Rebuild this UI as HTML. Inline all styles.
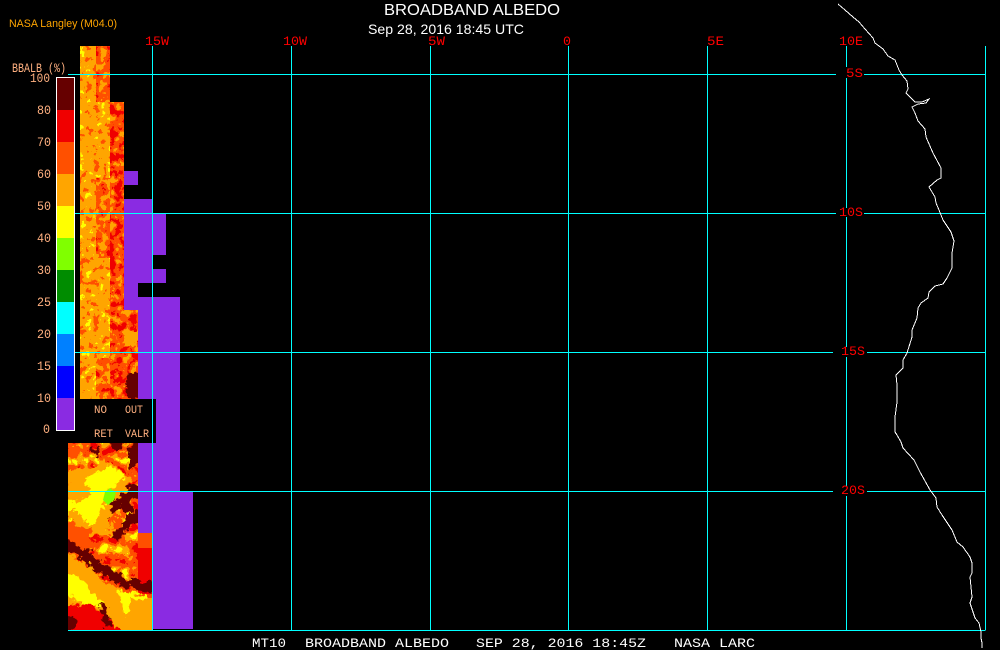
<!DOCTYPE html>
<html><head><meta charset="utf-8"><title>Broadband Albedo</title>
<style>
html,body{margin:0;padding:0;background:#000;width:1000px;height:650px;overflow:hidden}
svg{display:block}
text{font-family:"Liberation Sans",sans-serif}
.r{fill:#ff0000;font-size:13px;font-family:"Liberation Mono",monospace}
.o{fill:#ffb080;font-size:13px;font-family:"Liberation Mono",monospace}
.l{fill:#ffb080;font-size:11px;font-family:"Liberation Mono",monospace}
.b{fill:#fff;font-size:13px;font-family:"Liberation Mono",monospace}
</style></head><body>
<svg width="1000" height="650" viewBox="0 0 1000 650" xmlns="http://www.w3.org/2000/svg">
<defs>
<filter id="fo" x="0" y="0" width="1" height="1" color-interpolation-filters="sRGB">
<feTurbulence type="fractalNoise" baseFrequency="0.14" numOctaves="4" seed="4"/>
<feColorMatrix type="matrix" values="2 0 0 0 -.5 2 0 0 0 -.5 2 0 0 0 -.5 0 0 0 0 1"/>
<feComponentTransfer>
<feFuncR type="discrete" tableValues="1 1 1 1 1 1 1 1"/>
<feFuncG type="discrete" tableValues=".31 .31 .65 .65 .65 .65 .65 1"/>
<feFuncB type="discrete" tableValues="0 0 0 0 0 0 0 0"/>
</feComponentTransfer>
</filter>
<filter id="fr" x="0" y="0" width="1" height="1" color-interpolation-filters="sRGB">
<feTurbulence type="fractalNoise" baseFrequency="0.14" numOctaves="4" seed="9"/>
<feColorMatrix type="matrix" values="2 0 0 0 -.5 2 0 0 0 -.5 2 0 0 0 -.5 0 0 0 0 1"/>
<feComponentTransfer>
<feFuncR type="discrete" tableValues=".94 1 1 1 1 1 1 1"/>
<feFuncG type="discrete" tableValues="0 .31 .31 .31 .31 .65 .65 .65"/>
<feFuncB type="discrete" tableValues="0 0 0 0 0 0 0 0"/>
</feComponentTransfer>
</filter>
<filter id="fd" x="0" y="0" width="1" height="1" color-interpolation-filters="sRGB">
<feTurbulence type="fractalNoise" baseFrequency="0.13" numOctaves="4" seed="14"/>
<feColorMatrix type="matrix" values="2 0 0 0 -.5 2 0 0 0 -.5 2 0 0 0 -.5 0 0 0 0 1"/>
<feComponentTransfer>
<feFuncR type="discrete" tableValues=".94 .94 .94 1 1 1 1 1"/>
<feFuncG type="discrete" tableValues="0 0 0 .31 .31 .31 .65 .65"/>
<feFuncB type="discrete" tableValues="0 0 0 0 0 0 0 0"/>
</feComponentTransfer>
</filter>
<filter id="fb" x="0" y="0" width="1" height="1" color-interpolation-filters="sRGB">
<feTurbulence type="fractalNoise" baseFrequency="0.09" numOctaves="4" seed="21"/>
<feColorMatrix type="matrix" values="2 0 0 0 -.5 2 0 0 0 -.5 2 0 0 0 -.5 0 0 0 0 1"/>
<feComponentTransfer>
<feFuncR type="discrete" tableValues=".94 .94 1 1 1 1 1 1"/>
<feFuncG type="discrete" tableValues="0 0 .31 .31 .31 .65 .65 1"/>
<feFuncB type="discrete" tableValues="0 0 0 0 0 0 0 0"/>
</feComponentTransfer>
</filter>
<filter id="rag" filterUnits="userSpaceOnUse" x="50" y="300" width="120" height="340" color-interpolation-filters="sRGB">
<feTurbulence type="fractalNoise" baseFrequency="0.17" numOctaves="4" seed="3" result="n"/>
<feDisplacementMap in="SourceGraphic" in2="n" scale="12" xChannelSelector="R" yChannelSelector="G"/>
</filter>
<clipPath id="low"><polygon points="68,443 138,443 138,533 152,533 152,630 68,630"/></clipPath>
<clipPath id="pat"><rect x="124" y="310" width="14" height="89"/></clipPath>
</defs>

<rect width="1000" height="650" fill="#000"/>

<!-- purple no-retrieval areas -->
<g fill="#8a2be2" shape-rendering="crispEdges">
<rect x="124" y="171" width="14" height="14"/>
<rect x="124" y="199" width="28" height="14"/>
<rect x="124" y="213" width="42" height="42"/>
<rect x="124" y="255" width="28" height="14"/>
<rect x="124" y="269" width="42" height="14"/>
<rect x="124" y="283" width="14" height="14"/>
<rect x="124" y="297" width="56" height="14"/>
<rect x="138" y="310" width="42" height="181"/>
<rect x="138" y="491" width="14" height="42"/>
<rect x="152" y="491" width="41" height="138"/>
</g>

<!-- upper swath -->
<g shape-rendering="crispEdges">
<rect x="80" y="46" width="16" height="353" filter="url(#fo)"/>
<rect x="96" y="46" width="14" height="56" filter="url(#fr)"/>
<rect x="96" y="102" width="14" height="76" filter="url(#fo)"/>
<rect x="96" y="178" width="14" height="80" filter="url(#fr)"/>
<rect x="96" y="258" width="14" height="100" filter="url(#fo)"/>
<rect x="96" y="358" width="14" height="41" filter="url(#fr)"/>
<rect x="110" y="102" width="14" height="297" filter="url(#fd)"/>
<rect x="124" y="310" width="14" height="89" filter="url(#fd)"/>
</g>
<g clip-path="url(#pat)"><g filter="url(#rag)">
<polygon fill="#660000" points="126,374 140,372 140,398 128,400"/>
<polygon fill="#ffa500" points="124,330 140,330 140,345 124,345"/>
</g></g>

<!-- lower swath -->
<g clip-path="url(#low)">
<rect x="68" y="443" width="84" height="187" filter="url(#fb)" shape-rendering="crispEdges"/>
<rect x="138" y="533" width="14" height="97" fill="#ff5000"/>
<rect x="138" y="548" width="14" height="46" fill="#f00000"/>
<rect x="138" y="598" width="14" height="32" fill="#ffa500"/>
<g filter="url(#rag)">
<polygon fill="#ffa500" points="70,470 110,462 132,480 120,500 104,530 130,535 85,535 64,510"/>
<polygon fill="#ffff00" points="84,478 112,466 126,478 108,490 116,495 100,510 94,528 84,520 72,505 92,495"/>
<polygon fill="#ffff00" points="62,500 76,500 74,510 62,512"/>
<polygon fill="#ff5000" points="60,518 90,530 96,550 60,548"/>
<polygon fill="#ffa500" points="60,552 84,562 108,584 136,598 136,635 90,628 60,600"/>
<polygon fill="#ffff00" points="62,570 80,578 96,596 104,606 84,606 64,590"/>
<polygon fill="#ffff00" points="118,592 146,594 146,612 124,614"/>
<polygon fill="#ffa500" points="130,600 156,600 156,640 130,640"/>
<polygon fill="#f00000" points="60,606 90,604 116,624 128,640 60,640"/>
<polygon fill="#660000" points="66,612 78,622 72,632 62,626"/>
<polygon fill="#660000" points="60,536 78,546 92,552 100,563 112,570 125,578 140,582 158,582 158,594 138,590 122,586 108,578 92,570 84,560 60,548"/>
<polygon fill="#660000" points="128,448 136,440 142,440 142,462 130,470"/>
<polygon fill="#660000" points="106,440 128,440 116,452"/>
<polygon fill="#660000" points="112,503 128,488 142,482 142,492 122,504 110,516"/>
<polygon fill="#660000" points="114,534 128,515 142,508 142,520 126,530 118,542"/>
<polygon fill="#660000" points="120,504 132,498 134,510 124,514"/>
<polygon fill="#660000" points="98,606 104,604 114,626 106,628"/>
<polygon fill="#660000" points="88,450 100,446 98,456"/>
</g>
<polygon fill="#80ff00" points="105,492 110,488 116,493 114,500 108,505 103,500"/>
</g>

<!-- legend backing -->
<rect x="68" y="399" width="88" height="44" fill="#000"/>
<rect x="68" y="46" width="12" height="397" fill="#000"/>

<!-- grid -->
<g stroke="#00ffff" stroke-width="1" fill="none" shape-rendering="crispEdges">
<path d="M68 74.5H836M864 74.5H985"/>
<path d="M68 213.5H836M864 213.5H985"/>
<path d="M68 352.5H833M867 352.5H985"/>
<path d="M68 491.5H833M867 491.5H985"/>
<path d="M68 630.5H985.5"/>
<path d="M152.5 46V630"/>
<path d="M291.5 46V630"/>
<path d="M430.5 46V630"/>
<path d="M568.5 46V630"/>
<path d="M707.5 46V630"/>
<path d="M846.5 46V67M846.5 78V208M846.5 217V347M846.5 357V486M846.5 496V630"/>
<path d="M985.5 46V630"/>
</g>

<!-- coastline -->
<polyline fill="none" stroke="#fff" stroke-width="1" shape-rendering="crispEdges" points="838,4 845,10 853,17 859,22 865,29 873,38 875,43 883,49 888,56 895,60 897,65 899,70 902,75 907,81 908,89 906,93 912,99 915,102 922,102 929,99 926,103 918,104 912,107 915,113 918,121 925,129 926,137 933,153 941,168 941,178 937,180 929,187 935,197 936,203 939,210 943,220 945,223 951,232 954,241 952,253 952,268 947,278 943,284 935,286 929,292 928,298 921,303 918,308 917,318 912,330 912,337 907,353 903,360 903,368 896,375 897,385 897,402 895,417 895,432 897,435 901,442 903,448 914,460 920,472 930,490 936,498 937,507 942,515 952,530 957,542 963,547 970,557 972,563 972,573 970,577 971,587 972,597 970,603 975,618 979,623 981,632 981,638 982,643 982,648"/>

<!-- colour bar -->
<g shape-rendering="crispEdges">
<rect x="57" y="78" width="17" height="32" fill="#660000"/>
<rect x="57" y="110" width="17" height="32" fill="#f00000"/>
<rect x="57" y="142" width="17" height="32" fill="#ff5000"/>
<rect x="57" y="174" width="17" height="32" fill="#ffa500"/>
<rect x="57" y="206" width="17" height="32" fill="#ffff00"/>
<rect x="57" y="238" width="17" height="32" fill="#80ff00"/>
<rect x="57" y="270" width="17" height="32" fill="#008c00"/>
<rect x="57" y="302" width="17" height="32" fill="#00ffff"/>
<rect x="57" y="334" width="17" height="32" fill="#0080ff"/>
<rect x="57" y="366" width="17" height="32" fill="#0000ff"/>
<rect x="57" y="398" width="17" height="32" fill="#8a2be2"/>
<rect x="56.5" y="77.5" width="18" height="353" fill="none" stroke="#fff"/>
</g>

<!-- text -->
<text fill="#fff" x="384" y="15" font-size="16" textLength="176" lengthAdjust="spacingAndGlyphs">BROADBAND ALBEDO</text>
<text fill="#fff" x="368" y="34" font-size="14" textLength="156" lengthAdjust="spacingAndGlyphs">Sep 28, 2016 18:45 UTC</text>
<text x="9" y="27" fill="#ffa500" font-size="11" textLength="108" lengthAdjust="spacingAndGlyphs">NASA Langley (M04.0)</text>

<text class="o" x="12" y="72" textLength="54" lengthAdjust="spacingAndGlyphs">BBALB (%)</text>
<text class="o" x="30" y="82" textLength="20" lengthAdjust="spacingAndGlyphs">100</text>
<text class="o" x="37" y="114" textLength="14" lengthAdjust="spacingAndGlyphs">80</text>
<text class="o" x="37" y="146" textLength="14" lengthAdjust="spacingAndGlyphs">70</text>
<text class="o" x="37" y="178" textLength="14" lengthAdjust="spacingAndGlyphs">60</text>
<text class="o" x="37" y="210" textLength="14" lengthAdjust="spacingAndGlyphs">50</text>
<text class="o" x="37" y="242" textLength="14" lengthAdjust="spacingAndGlyphs">40</text>
<text class="o" x="37" y="274" textLength="14" lengthAdjust="spacingAndGlyphs">30</text>
<text class="o" x="37" y="306" textLength="14" lengthAdjust="spacingAndGlyphs">25</text>
<text class="o" x="37" y="338" textLength="14" lengthAdjust="spacingAndGlyphs">20</text>
<text class="o" x="37" y="370" textLength="14" lengthAdjust="spacingAndGlyphs">15</text>
<text class="o" x="37" y="402" textLength="14" lengthAdjust="spacingAndGlyphs">10</text>
<text class="o" x="43" y="433" textLength="7" lengthAdjust="spacingAndGlyphs">0</text>

<text class="l" x="94" y="413" textLength="13" lengthAdjust="spacingAndGlyphs">NO</text>
<text class="l" x="125" y="413" textLength="18" lengthAdjust="spacingAndGlyphs">OUT</text>
<text class="l" x="94" y="437" textLength="19" lengthAdjust="spacingAndGlyphs">RET</text>
<text class="l" x="125" y="437" textLength="24" lengthAdjust="spacingAndGlyphs">VALR</text>

<text class="r" x="145" y="45" textLength="24" lengthAdjust="spacingAndGlyphs">15W</text>
<text class="r" x="283" y="45" textLength="24" lengthAdjust="spacingAndGlyphs">10W</text>
<text class="r" x="428" y="45" textLength="17" lengthAdjust="spacingAndGlyphs">5W</text>
<text class="r" x="563" y="45" textLength="8" lengthAdjust="spacingAndGlyphs">0</text>
<text class="r" x="707" y="45" textLength="17" lengthAdjust="spacingAndGlyphs">5E</text>
<text class="r" x="839" y="45" textLength="24" lengthAdjust="spacingAndGlyphs">10E</text>
<text class="r" x="846" y="77" textLength="17" lengthAdjust="spacingAndGlyphs">5S</text>
<text class="r" x="839" y="216" textLength="24" lengthAdjust="spacingAndGlyphs">10S</text>
<text class="r" x="841" y="355" textLength="24" lengthAdjust="spacingAndGlyphs">15S</text>
<text class="r" x="841" y="494" textLength="24" lengthAdjust="spacingAndGlyphs">20S</text>

<text class="b" x="252" y="647" textLength="34" lengthAdjust="spacingAndGlyphs">MT10</text>
<text class="b" x="305" y="647" textLength="144" lengthAdjust="spacingAndGlyphs">BROADBAND ALBEDO</text>
<text class="b" x="476" y="647" textLength="170" lengthAdjust="spacingAndGlyphs">SEP 28, 2016 18:45Z</text>
<text class="b" x="674" y="647" textLength="81" lengthAdjust="spacingAndGlyphs">NASA LARC</text>
</svg>
</body></html>
